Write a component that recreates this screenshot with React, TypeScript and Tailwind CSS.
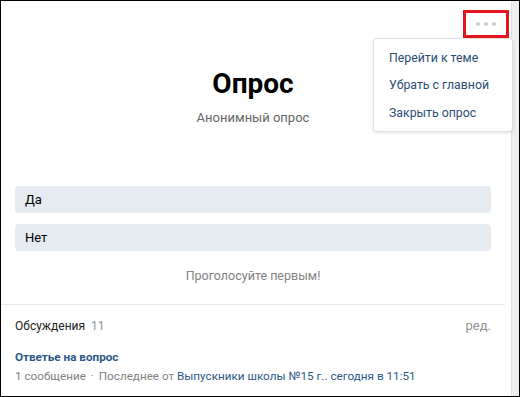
import React from 'react';

const FONT = { fontFamily: 'Roboto, "Open Sans", Arial, sans-serif' };

const menuItems = ['Перейти к теме', 'Убрать с главной', 'Закрыть опрос'];

const PollOption: React.FC<{ label: string }> = ({ label }) => (
  <div className="h-[27px] rounded-[4px] bg-[#e5ebf1] flex items-center px-[10px] text-[13px] text-[#000]">
    {label}
  </div>
);

export default function App() {
  return (
    <div
      className="relative w-[520px] h-[397px] overflow-hidden border border-black bg-white flex"
      style={FONT}
    >
      {/* card */}
      <div className="w-[504px] flex flex-col">
        <div className="px-[14px] pt-[67px]">
          <h1 className="text-center text-[28px] leading-[32px] font-bold text-[#000]">Опрос</h1>
          <p className="mt-[9px] text-center text-[13px] leading-[18px] text-[#656565]">Анонимный опрос</p>

          <div className="mt-[59px] flex flex-col gap-[11px]">
            <PollOption label="Да" />
            <PollOption label="Нет" />
          </div>

          <p className="mt-[17px] text-center text-[12.5px] leading-[16px] text-[#828282]">Проголосуйте первым!</p>
        </div>

        <div className="mt-[20px] h-px bg-[#e7e8ec]" />

        <div className="px-[14px] pt-[13px]">
          <div className="flex items-center justify-between text-[12px] leading-[16px]">
            <div className="text-[#222]">
              Обсуждения <span className="ml-[3px] text-[#939393]">11</span>
            </div>
            <span className="text-[13px] text-[#939393]">ред.</span>
          </div>
          <div className="mt-[15px] text-[11.7px] leading-[16px] font-bold text-[#2a5885]">Ответье на вопрос</div>
          <div className="mt-[3px] text-[11.7px] leading-[16px] text-[#828282] whitespace-nowrap">
            1 сообщение <span className="mx-[2px]">·</span> Последнее от{' '}
            <span className="text-[#2a5885]">Выпускники школы №15 г..</span>{' '}
            <span className="text-[#2a5885]">сегодня в 11:51</span>
          </div>
        </div>
      </div>

      <div className="flex-1" />
      {/* scrollbar strip */}
      <div className="w-[8px] bg-[#eeeeee] border-l border-[#e0e0e0]" />

      {/* more button, highlighted */}
      <div className="absolute left-[462px] top-[9px] w-[46px] h-[28px] border-[3px] border-[#e8141c] flex items-center justify-center gap-[4px]">
        <span className="w-[4px] h-[4px] rounded-full bg-[#c5cad1]" />
        <span className="w-[4px] h-[4px] rounded-full bg-[#c5cad1]" />
        <span className="w-[4px] h-[4px] rounded-full bg-[#c5cad1]" />
      </div>

      {/* dropdown menu */}
      <div className="absolute left-[372px] top-[37px] w-[140px] pt-[5px] pb-[4px] bg-white border border-[#dce1e6] rounded-[4px] shadow-[0_1px_3px_rgba(0,0,0,0.12)]">
        {menuItems.map(item => (
          <div key={item} className="h-[27.5px] flex items-center px-[15px] text-[12.3px] text-[#2c4d73] whitespace-nowrap">
            {item}
          </div>
        ))}
      </div>
    </div>
  );
}
